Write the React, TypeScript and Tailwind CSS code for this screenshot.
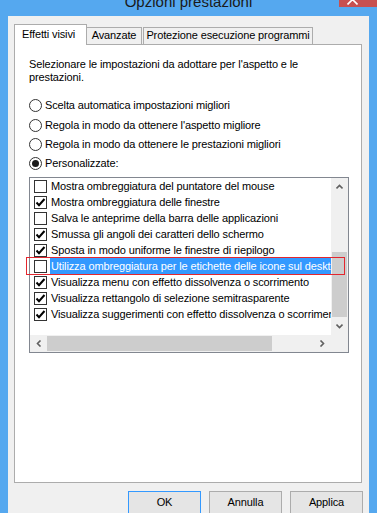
import React from 'react';

const items: { label: string; checked: boolean; selected?: boolean }[] = [
  { label: 'Mostra ombreggiatura del puntatore del mouse', checked: false },
  { label: 'Mostra ombreggiatura delle finestre', checked: true },
  { label: 'Salva le anteprime della barra delle applicazioni', checked: false },
  { label: 'Smussa gli angoli dei caratteri dello schermo', checked: true },
  { label: 'Sposta in modo uniforme le finestre di riepilogo', checked: true },
  { label: 'Utilizza ombreggiatura per le etichette delle icone sul desktop', checked: false, selected: true },
  { label: 'Visualizza menu con effetto dissolvenza o scorrimento', checked: true },
  { label: 'Visualizza rettangolo di selezione semitrasparente', checked: true },
  { label: 'Visualizza suggerimenti con effetto dissolvenza o scorrimento', checked: true },
];

const radios = [
  { label: 'Scelta automatica impostazioni migliori', h: 'h-[20px]', on: false },
  { label: "Regola in modo da ottenere l'aspetto migliore", h: 'h-[20px]', on: false },
  { label: 'Regola in modo da ottenere le prestazioni migliori', h: 'h-[19px]', on: false },
  { label: 'Personalizzate:', h: 'h-[19px]', on: true },
];

const Check: React.FC<{ checked: boolean }> = ({ checked }) => (
  <div className="w-[13px] h-[13px] shrink-0 border border-[#333333] bg-white flex items-center justify-center">
    {checked && (
      <svg width="11" height="11" viewBox="0 0 11 11">
        <polyline points="1.5,5.5 4,8.2 9.5,2" fill="none" stroke="#000" strokeWidth="2" />
      </svg>
    )}
  </div>
);

const Radio: React.FC<{ on: boolean }> = ({ on }) => (
  <div className="w-[13px] h-[13px] shrink-0 rounded-full border border-[#333333] bg-white flex items-center justify-center">
    {on && <div className="w-[7px] h-[7px] rounded-full bg-[#1a1a1a]" />}
  </div>
);

const Chevron: React.FC<{ dir: 'up' | 'down' | 'left' | 'right' }> = ({ dir }) => {
  const pts = {
    up: '0.5,4.5 3.5,1.5 6.5,4.5',
    down: '0.5,1.5 3.5,4.5 6.5,1.5',
    left: '4.5,0.5 1.5,3.5 4.5,6.5',
    right: '1.5,0.5 4.5,3.5 1.5,6.5',
  }[dir];
  const vertical = dir === 'up' || dir === 'down';
  return (
    <svg width={vertical ? 7 : 6} height={vertical ? 6 : 7} viewBox={vertical ? '0 0 7 6' : '0 0 6 7'}>
      <polyline points={pts} fill="none" stroke="#606060" strokeWidth="1.6" />
    </svg>
  );
};

export default function App() {
  return (
    <div className="w-[377px] h-[513px] overflow-hidden bg-[#55a8ef] font-['Liberation_Sans',Arial,sans-serif] text-[11px] tracking-[-0.12px] text-black select-none">
      {/* title bar */}
      <div className="relative h-[16px]">
        <div className="absolute left-0 right-0 top-[-7px] text-center text-[15px] leading-[18px] tracking-normal text-[#1a1a1a]">
          Opzioni prestazioni
        </div>
        <div className="absolute right-0 top-0 w-[38px] h-[7px] bg-[#c75050] overflow-hidden">
          <svg className="absolute left-[8px] top-[-6px]" width="11" height="11" viewBox="0 0 11 11">
            <path d="M0.5 0.5 L10.5 10.5 M10.5 0.5 L0.5 10.5" stroke="#fff" strokeWidth="1.6" />
          </svg>
        </div>
      </div>

      {/* client area */}
      <div className="ml-[8px] w-[361px] h-[497px] bg-[#f0f0f0] pt-[8px] pl-[6px]">
        {/* tabs */}
        <div className="flex items-end h-[20px]">
          <div className="relative z-10 w-[73px] h-[21px] -mb-px bg-white border border-b-0 border-[#acacac] pl-[7px] pt-[2px] leading-[15px] whitespace-nowrap">
            Effetti visivi
          </div>
          <div className="w-[55px] h-[17px] bg-[#f0f0f0] border border-l-0 border-b-0 border-[#acacac] text-center leading-[15px] whitespace-nowrap">
            Avanzate
          </div>
          <div className="ml-px w-[170px] h-[17px] bg-[#f0f0f0] border border-b-0 border-[#acacac] text-center leading-[15px] whitespace-nowrap">
            Protezione esecuzione programmi
          </div>
        </div>

        {/* panel */}
        <div className="relative w-[348px] h-[439px] bg-white border border-[#acacac] pl-[14px] pt-[13px]">
          <p className="leading-[13px] w-[300px]">
            Selezionare le impostazioni da adottare per l'aspetto e le prestazioni.
          </p>

          <div className="mt-[11px] flex flex-col">
            {radios.map((r) => (
              <div key={r.label} className={`${r.h} flex items-center gap-[3px] whitespace-nowrap`}>
                <Radio on={r.on} />
                <span>{r.label}</span>
              </div>
            ))}
          </div>

          {/* list box */}
          <div className="mt-[4px] w-[320px] h-[176px] border border-[#828790] bg-white grid grid-cols-[301px_17px] grid-rows-[157px_17px]">
            <div className="overflow-hidden">
              {items.map((it) => (
                <div key={it.label} className="h-[16px] flex items-center pl-[4px]">
                  <Check checked={it.checked} />
                  <div
                    className={`ml-[3px] h-full flex-1 flex items-center pl-[1px] whitespace-nowrap overflow-hidden ${
                      it.selected ? 'bg-[#3399ff] text-white' : ''
                    }`}
                  >
                    {it.label}
                  </div>
                </div>
              ))}
            </div>

            {/* vertical scrollbar */}
            <div className="bg-[#f0f0f0] flex flex-col items-center">
              <div className="h-[17px] flex items-center justify-center">
                <Chevron dir="up" />
              </div>
              <div className="h-[57px]" />
              <div className="w-[15px] h-[65px] bg-[#cdcdcd]" />
              <div className="flex-1 flex items-center justify-center">
                <Chevron dir="down" />
              </div>
            </div>

            {/* horizontal scrollbar */}
            <div className="bg-[#f0f0f0] flex items-center">
              <div className="w-[17px] flex items-center justify-center">
                <Chevron dir="left" />
              </div>
              <div className="w-[225px] h-[15px] bg-[#cdcdcd]" />
              <div className="flex-1 flex items-center justify-end pr-[6px]">
                <Chevron dir="right" />
              </div>
            </div>
            <div className="bg-[#f0f0f0]" />
          </div>

          {/* red annotation frame */}
          <div className="absolute left-[11px] top-[212px] w-[319px] h-[18px] border-[1.5px] border-[#e3262e]" />
        </div>

        {/* buttons */}
        <div className="mt-[8px] w-[349px] flex justify-end gap-[8px]">
          <button className="w-[73px] h-[23px] border border-[#3399ff] bg-[#e5e5e5] leading-[21px] text-center">OK</button>
          <button className="w-[73px] h-[23px] border border-[#acacac] bg-[#e5e5e5] leading-[21px] text-center">Annulla</button>
          <button className="w-[73px] h-[23px] border border-[#acacac] bg-[#e5e5e5] leading-[21px] text-center">Applica</button>
        </div>
      </div>
    </div>
  );
}
